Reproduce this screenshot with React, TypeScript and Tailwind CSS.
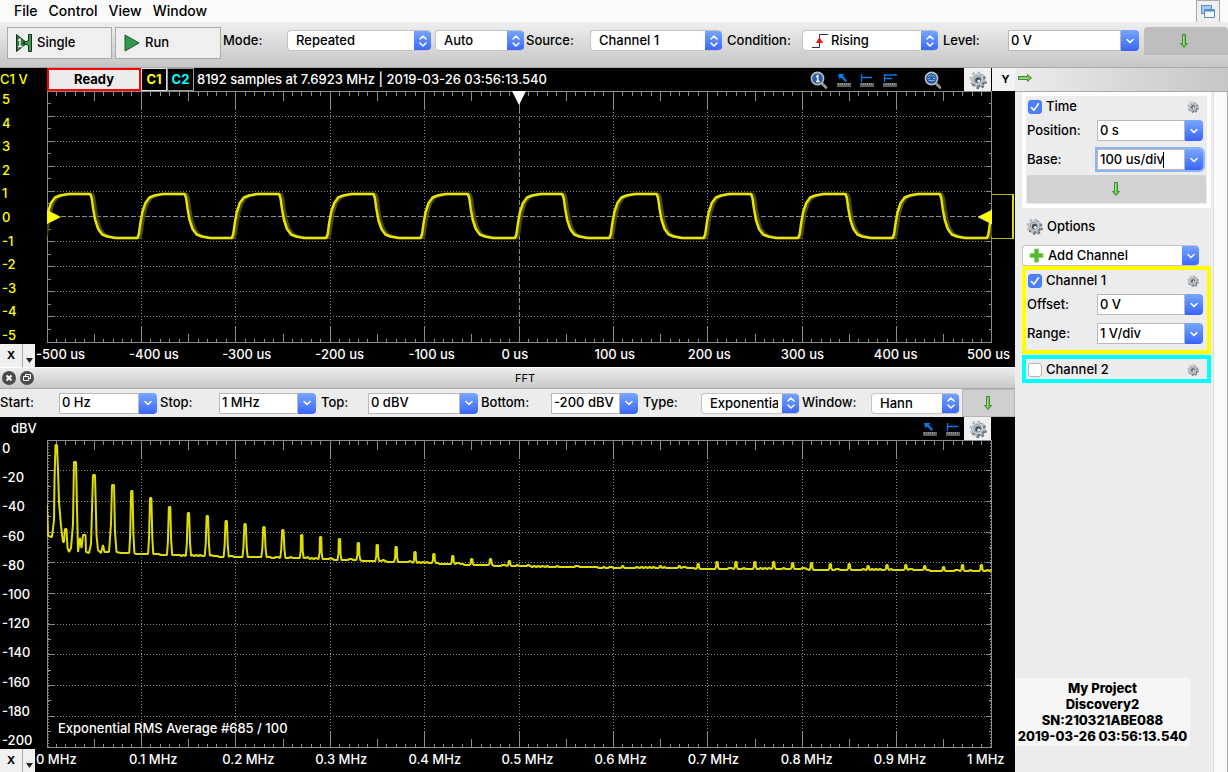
import { useId, type ReactNode } from "react";

const FONT = "font-['Inter','Liberation_Sans',sans-serif]";

/* ---------- icons ---------- */

const Chevron = () => (
  <svg width="10" height="6" viewBox="0 0 10 6" fill="none" stroke="white" strokeWidth="1.5" strokeLinecap="round" strokeLinejoin="round">
    <path d="M2 1.5 5 4.5 8 1.5" />
  </svg>
);

const UpDown = () => (
  <svg width="10" height="14" viewBox="0 0 10 14" fill="none" stroke="white" strokeWidth="1.5" strokeLinecap="round" strokeLinejoin="round">
    <path d="M2 5 5 2 8 5M2 9 5 12 8 9" />
  </svg>
);

const GreenArrow = ({ right = false }: { right?: boolean }) => (
  <svg width="14" height="14" viewBox="0 0 14 14" className={right ? "-rotate-90" : ""}>
    <path d="M5.5.5h3v9h2L7 13.5 3.5 9.5h2z" fill="#6cc04a" stroke="#3b8a35" strokeLinejoin="round" />
    <path d="M6.7 1.5v9" stroke="#b5e39a" />
  </svg>
);

const Gear = ({ size }: { size: number }) => (
  <svg width={size} height={size} viewBox="0 0 18 18">
    <g fill="#6f787e">
      <circle cx="10" cy="10.2" r="6.2" />
      <circle cx="10" cy="10.2" r="6.8" fill="none" stroke="#6f787e" strokeWidth="2" strokeDasharray="2.7 2.6" />
    </g>
    <circle cx="8.4" cy="8.4" r="5.9" fill="#c9ced2" />
    <circle cx="8.4" cy="8.4" r="6.8" fill="none" stroke="#b4bbc0" strokeWidth="2.4" strokeDasharray="2.7 2.6" />
    <circle cx="8.4" cy="8.4" r="3.8" fill="none" stroke="#8b959b" strokeWidth="1" />
    <circle cx="9" cy="9" r="2.8" fill="#414c54" />
    <circle cx="9.8" cy="10" r="1.6" fill="#e6eaec" />
  </svg>
);

const Magnifier = ({ one = false }: { one?: boolean }) => (
  <svg width="18" height="18" viewBox="0 0 18 18">
    <path d="m11.5 12 4.5 4.5" stroke="#9a9a9a" strokeWidth="2.6" strokeLinecap="round" />
    <circle cx="7.5" cy="7.5" r="6.1" fill="#2a5da0" stroke="#b9bdc2" strokeWidth="1.6" />
    {one ? (
      <path d="M6 6l1.8-1.5V10.5M6 10.5h3.6" fill="none" stroke="white" strokeWidth="1.3" />
    ) : (
      <path d="M4.500 9.500h6M3.500 7.500h2.500M9 7.500h2.500M6 4 4 6M9 4l2 2M6.500 5h2" fill="none" stroke="#7fb0e8" />
    )}
  </svg>
);

const MeasureIcon = ({ kind }: { kind: "cursor" | "single" | "double" }) => (
  <svg width="14" height="14" viewBox="0 0 14 14" fill="none">
    <path d="M0 10h14v4H0z" fill="#5f5f5f" />
    <path d="M1.5 10v2M3.5 10v2M5.5 10v2M7.5 10v2M9.5 10v2M11.5 10v2" stroke="#8d8d8d" />
    {kind === "cursor" && <path d="M1 1h6.500L5.800 2.800 10 7.500 8.500 9 4.200 4.500 2.500 6.500z" fill="#0a7ae8" />}
    {kind === "single" && <path d="M1.5 1v8M1.5 4.500H12" stroke="#0a7ae8" strokeWidth="1.300" />}
    {kind === "double" && <path d="M1.5 1v8M1.5 2H14M1.5 5.500H9" stroke="#0a7ae8" strokeWidth="1.300" />}
  </svg>
);

const SingleIcon = () => (
  <svg width="16" height="18" viewBox="0 0 16 18">
    <path d="M.5.5 11 9 .5 17.500z" fill="#2c7a3f" stroke="#1c2b20" />
    <path d="M15.500.500h-3v6L7 9l5.500 2.500v6h3z" fill="#35a04f" stroke="#1c2b20" />
    <path d="M2 6.500 4 5v7.500M2 12.500h4.500" fill="none" stroke="white" strokeWidth="1.300" />
  </svg>
);

const RunIcon = () => (
  <svg width="16" height="18" viewBox="0 0 16 18">
    <path d="M1 1l14 8L1 17z" fill="#2f9a4b" stroke="#23502f" strokeLinejoin="round" />
  </svg>
);

const RisingIcon = () => (
  <svg width="18" height="16" viewBox="0 0 18 16" fill="none">
    <path d="M1 14.500h7.500v-13H17" stroke="#333" />
    <path d="m8.500 4 3.500 6H5z" fill="#ff1010" />
  </svg>
);

/* ---------- controls ---------- */

const CAP = "bg-linear-to-b from-[#78a6ff] to-[#3b63fb] flex items-center justify-center";

type FieldProps = { label: string; value: string; labelWidth?: string; width: string };

const Combo = ({ label, value, labelWidth = "", width, focused = false }: FieldProps & { focused?: boolean }) => {
  const id = useId();
  return (
    <div className="flex items-center shrink-0">
      <label htmlFor={id} className={labelWidth}>{label}</label>
      <div className={`flex h-[21px] rounded-r-[4px] ${width} ${focused ? "ring-2 ring-[#8db4f5]" : ""}`}>
        <div className="flex flex-1 min-w-0 items-center border border-[#b9b9b9] bg-white">
          <input id={id} defaultValue={value} size={focused ? 9 : 4} className={focused ? "w-[65px] pl-[2px] outline-none" : "w-full pl-[2px] outline-none"} />
          {focused && <span className="h-4 w-px bg-black" />}
        </div>
        <button aria-label={`${label} values`} className={`w-[18px] rounded-r-[4px] ${CAP}`}>
          <Chevron />
        </button>
      </div>
    </div>
  );
};

const Pick = ({ label, value, labelWidth = "", width, hideLabel = false, icon }: FieldProps & { hideLabel?: boolean; icon?: ReactNode }) => {
  const id = useId();
  return (
    <div className="flex items-center shrink-0">
      {!hideLabel && <label htmlFor={id} className={labelWidth}>{label}</label>}
      <div className={`flex h-[21px] overflow-hidden rounded-[4px] border border-[#c4c4c4] border-r-0 bg-white ${width}`}>
        {icon && <span className="flex items-center pl-2">{icon}</span>}
        <select id={id} aria-label={label} className={`flex-1 min-w-0 appearance-none pr-1 outline-none ${icon ? "pl-[2px]" : "pl-[8px]"}`}>
          <option>{value}</option>
        </select>
        <span className={`-my-px w-[17px] ${CAP}`}>
          <UpDown />
        </span>
      </div>
    </div>
  );
};

const Check = ({ label, checked = false }: { label: string; checked?: boolean }) => (
  <div className="flex h-5 items-center justify-between pl-[2px] pr-2 pt-px">
    <label className="flex items-center gap-1">
      <span className="grid">
        <input
          type="checkbox"
          defaultChecked={checked}
          className="peer col-start-1 row-start-1 size-[14px] appearance-none rounded-[3px] border border-[#b5b5b5] bg-white checked:border-[#4a78f5] checked:bg-[#4f80fa]"
        />
        <svg viewBox="0 0 14 14" className="pointer-events-none invisible col-start-1 row-start-1 size-[14px] peer-checked:visible" fill="none" stroke="white" strokeWidth="1.6" strokeLinecap="round">
          <path d="M3.500 7.500 6 10.200 10.500 3.800" />
        </svg>
      </span>
      {label}
    </label>
    <button aria-label={`${label} settings`}><Gear size={12} /></button>
  </div>
);

const AxisCorner = () => (
  <div className="flex h-[23px] w-[35px] shrink-0 text-[11px] font-bold text-black">
    <button className="w-[23px] border-r border-[#aaa] bg-[#f0f0f0]">X</button>
    <button aria-label="X axis menu" className="flex flex-1 items-end justify-center bg-[#f0f0f0] pb-1">
      <svg width="7" height="5" viewBox="0 0 7 5"><path d="M0 0h7L3.500 5z" fill="#222" /></svg>
    </button>
  </div>
);

/* ---------- plots ---------- */

const W = 945;

const Grid = ({ height, centered = false, fine = false }: { height: number; centered?: boolean; fine?: boolean }) => {
  const bottom = height - 0.5;
  const dx = (W - 1) / 10;
  const dy = (height - 1) / 10;
  const inner = [1, 2, 3, 4, 5, 6, 7, 8, 9];
  let ticks = "";
  for (let i = 1; i < 100; i++) {
    const x = Math.floor((i * dx) / 10) + 0.5;
    const len = i % 10 === 0 ? 17 : i % 5 === 0 ? 9 : 4;
    ticks += `M${x} .5v${len}M${x} ${bottom}v${-len}`;
  }
  for (let i = 1; i < 20; i++) {
    const y = Math.floor((i * dy) / 2) + 0.5;
    const len = i % 2 === 0 ? 6 : 3;
    ticks += `M.5 ${y}h${len}M${W - 0.5} ${y}h${-len}`;
  }
  return (
    <g stroke="#8c8c8c" fill="none" shapeRendering="crispEdges">
      <rect x=".5" y=".5" width={W - 1} height={height - 1} />
      <path d={ticks} />
      {inner.map((i) => {
        const mid = centered && i === 5;
        const x = Math.floor(i * dx) + 0.5;
        const y = Math.floor(i * dy) + 0.5;
        return (
          <g key={i} strokeDasharray={mid ? "5 2" : "1 2"}>
            <path d={`M${x} 18V${height - 18}`} />
            <path d={`M7 ${y}H${W - 7}`} />
          </g>
        );
      })}
      {fine && <path d={`M1.500 0V${height}M${W - 1.5} 0V${height}`} strokeDasharray="1 2" />}
    </g>
  );
};

const RISE = [[0, 147], [1.5, 143], [3, 132], [5, 121], [8, 112], [12, 106.5], [17, 104.5], [25, 103], [46.5, 103]];

const wave = (shift: number) => {
  const pts: string[] = [];
  for (let p = -1; p < 11; p++) {
    const start = -4 + p * 94.4 + shift;
    RISE.forEach(([t, y]) => pts.push(`${(start + t).toFixed(1)} ${y}`));
    RISE.forEach(([t, y]) => pts.push(`${(start + 47.2 + t).toFixed(1)} ${250 - y}`));
  }
  return "M" + pts.join("L");
};

const ScopePlot = () => (
  <svg viewBox={`0 0 ${W} 252`} preserveAspectRatio="none" className="h-[252px] min-w-0 flex-1">
    <Grid height={252} centered />
    <g fill="none" strokeLinejoin="round">
      <path d={wave(2.5)} stroke="#4d4b00" strokeWidth="2.5" />
      <path d={wave(0)} stroke="#e8e600" strokeWidth="2.5" />
    </g>
    <path d="M465 0h14l-7 14z" fill="white" />
    <path d="M0 119v14l14-7z" fill="#ffff00" />
    <path d="M945 119v14l-14-7z" fill="#ffff00" stroke="#fff" strokeWidth=".5" />
  </svg>
);

// first harmonics, traced point by point
const HEAD = [
  [0, 65], [1, 96], [5, 97], [7, 80], [7.5, 40], [8.5, 5], [10, 5], [11, 30], [12, 62], [14, 86], [16, 102], [17, 102], [18, 89], [19.5, 89],
  [20.5, 108], [22, 112], [24, 108], [26, 84], [27, 22], [29, 22], [30.5, 90], [31, 112], [33, 98], [34.5, 108], [36, 95], [38.5, 95], [39, 112],
  [42, 113], [44, 104], [46, 35], [48, 35], [49.5, 95], [51, 110], [54, 113], [56, 105], [57.5, 112], [62, 112], [64, 84], [65, 45], [67, 45],
  [68, 92], [69.500, 112], [74, 113],
];

// peak heights of the odd harmonics that follow, 18.88 px apart
const PEAKS = [
  51, 58, 67, 73, 76, 81, 84, 87, 90, 95, 97, 99, 103, 105, 107, 112, 114, 116, 119, 119, 121, 125, 126, 127, 127, 127, 126, 127, 126,
  126, 124, 122, 122, 122, 122, 123, 123, 124, 124, 126, 125, 125, 126, 127, 125, 125,
];

const BASE = [[74, 113], [145, 116], [250, 118], [350, 122], [430, 125], [500, 127], [600, 128], [700, 129], [820, 130], [945, 131]];

const floorAt = (x: number) => {
  const i = Math.max(1, BASE.findIndex(([bx]) => bx >= x));
  const [x0, y0] = BASE[i - 1];
  const [x1, y1] = BASE[i];
  return Math.round(y0 + ((y1 - y0) * (x - x0)) / (x1 - x0));
};

const spectrum = () => {
  const pts = HEAD.map((p) => p.join(" "));
  PEAKS.forEach((top, k) => {
    const x = 84.8 + k * 18.88;
    const floor = floorAt(x);
    const w = top < 92 ? 1.6 : 1;
    const knee = floor - (floor - top) * 0.3;
    pts.push(`${x - w - 1} ${floor}`, `${x - w} ${knee}`, `${x - 0.7} ${top}`, `${x + 0.7} ${top}`, `${x + w} ${knee}`, `${x + w + 1} ${floor}`);
    for (let j = 4; j < 16; j += 2) {
      const wobble = ((k * 7 + j * 5 + ((k * j) % 3)) % 4) === 1 ? -1 : 0;
      if (x + j < W) pts.push(`${x + j} ${floorAt(x + j) + wobble}`);
    }
  });
  return "M" + pts.join("L") + "H944";
};

const FftPlot = () => (
  <svg viewBox={`0 0 ${W} 308`} preserveAspectRatio="none" className="min-h-[308px] min-w-0 flex-1">
    <Grid height={308} fine />
    <path d={spectrum()} fill="none" stroke="#dcdc00" strokeWidth="2" strokeLinejoin="bevel" />
  </svg>
);

const YAxis = ({ labels, color }: { labels: string[]; color: string }) => (
  <div className={`flex w-[47px] shrink-0 flex-col justify-between pl-[2px] leading-4 ${color}`}>
    {labels.map((l) => <span key={l}>{l}</span>)}
  </div>
);

const XAxis = ({ labels }: { labels: string[] }) => (
  <div className="flex h-6 shrink-0 items-center">
    <AxisCorner />
    <div className="flex flex-1 pl-px whitespace-nowrap">
      {labels.map((l, i) => <span key={l} className={i < 10 ? "w-0 flex-1" : "w-[48px]"}>{l}</span>)}
    </div>
  </div>
);

/* ---------- page ---------- */

const TopBar = () => (
  <>
    <header className="flex h-[22px] items-center justify-between bg-[#fafafa] pl-[14px] pr-2 text-[14px]">
      <nav className="flex gap-[11px] pb-px leading-5">
        <button>File</button>
        <button>Control</button>
        <button>View</button>
        <button>Window</button>
      </nav>
      <button aria-label="Windows" className="flex h-[22px] w-6 items-center justify-center border border-b-0 border-[#aaa] bg-[#f0f0f0]">
        <svg width="14" height="13" viewBox="0 0 14 13" stroke="#5b8cc8">
          <path d="M.5.500h10v8H.5z" fill="#a9c8ee" />
          <path d="M3.500 4.500h10v8h-10z" fill="#f4f9ff" />
          <path d="M3.500 5.500h10" strokeWidth="2" />
        </svg>
      </button>
    </header>
    <div className="flex h-[46px] items-start border-b border-[#aaa] bg-linear-to-b from-[#efefef] to-[#c6c6c6] pt-[5px] pl-[7px]">
      <div className="flex gap-[3px]">
        <button className="flex h-8 w-[105px] items-center gap-[5px] border border-[#aaa] bg-[#efefef] pl-2"><SingleIcon />Single</button>
        <button className="flex h-8 w-[106px] items-center gap-[5px] border border-[#aaa] bg-[#efefef] pl-2"><RunIcon />Run</button>
      </div>
      <div className="flex flex-1 items-center pt-[3px] pl-[2px]">
        <Pick label="Mode:" value="Repeated" labelWidth="w-16" width="w-[144px] mr-1" />
        <Pick label="Trigger" hideLabel value="Auto" width="w-[89px] mr-[2px]" />
        <Pick label="Source:" value="Channel 1" labelWidth="w-16" width="w-[132px] mr-[5px]" />
        <Pick label="Condition:" value="Rising" labelWidth="w-[75px]" width="w-[136px] mr-[5px]" icon={<RisingIcon />} />
        <Combo label="Level:" value="0 V" labelWidth="w-[65px]" width="w-[131px] mr-[5px]" />
      </div>
      <button aria-label="Show more" className="flex h-7 w-[84px] items-center justify-center rounded-t-[4px] bg-[#bdbdbd] pr-1"><GreenArrow /></button>
    </div>
  </>
);

const Scope = () => (
  <section className="bg-black text-white">
    <div className="flex h-[23px] items-stretch">
      <span className="w-[47px] self-center text-[#ffff00]">C1 V</span>
      <span className="w-[94px] border-2 border-[#ff0000] bg-[#ececec] text-center font-bold leading-[19px] text-black">Ready</span>
      <button className="w-[26px] border border-[#ddd] font-bold text-[#ffff00]">C1</button>
      <button className="w-[27px] border border-[#999] font-bold text-[#00ffff]">C2</button>
      <span className="flex-1 self-center pl-[3px] whitespace-nowrap">8192 samples at 7.6923 MHz | 2019-03-26 03:56:13.540</span>
      <div className="flex items-center gap-[9px] pr-[22px]">
        <Magnifier one />
        <MeasureIcon kind="cursor" />
        <MeasureIcon kind="single" />
        <MeasureIcon kind="double" />
        <div className="pl-[18px]"><Magnifier /></div>
      </div>
      <button aria-label="Plot settings" className="flex w-[27px] items-center justify-center bg-[#f0f0f0]"><Gear size={18} /></button>
      <button className="ml-px w-[23px] bg-[#f3f3f3] pl-1 text-[11px] font-bold text-black">Y</button>
    </div>
    <div className="flex">
      <YAxis color="text-[#ffff00]" labels={["5", "4", "3", "2", "1", "0", "-1", "-2", "-3", "-4", "-5"]} />
      <ScopePlot />
      <svg width="23" height="252" viewBox="0 0 23 252" className="shrink-0">
        <path d="M0 103.500h21.500M0 147.500h21.500" stroke="#bdb800" />
        <path d="M21 103v45" stroke="#e0dc00" strokeWidth="2" />
      </svg>
    </div>
    <XAxis labels={["-500 us", "-400 us", "-300 us", "-200 us", "-100 us", "0 us", "100 us", "200 us", "300 us", "400 us", "500 us"]} />
  </section>
);

const Fft = () => (
  <section className="flex flex-1 flex-col">
    <div className="flex h-[22px] items-center border-t border-b border-t-white border-b-[#aaa] bg-linear-to-b from-[#ececec] to-[#c9c9c9] pl-[2px]">
      <div className="flex gap-1 pr-px">
        <button aria-label="Close">
          <svg width="14" height="14" viewBox="0 0 14 14"><circle cx="7" cy="7" r="7" fill="#4b4b4b" /><path d="m4.500 4.500 5 5m0-5-5 5" stroke="white" strokeWidth="2" /></svg>
        </button>
        <button aria-label="Detach">
          <svg width="14" height="14" viewBox="0 0 14 14" fill="none"><circle cx="7" cy="7" r="7" fill="#4b4b4b" /><path d="M5.500 5.500v-2h5v4h-2M3.500 5.500h5v4h-5z" stroke="white" /></svg>
        </button>
      </div>
      <h2 className="flex-1 text-center text-[11px] font-normal">FFT</h2>
    </div>
    <div className="flex h-7 items-center bg-[#ececec]">
      <Combo label="Start:" value="0 Hz" labelWidth="w-[59px]" width="w-[98px] mr-[3px]" />
      <Combo label="Stop:" value="1 MHz" labelWidth="w-[59px]" width="w-[97px] mr-[5px]" />
      <Combo label="Top:" value="0 dBV" labelWidth="w-[47px]" width="w-[110px] mr-[3px]" />
      <Combo label="Bottom:" value="-200 dBV" labelWidth="w-[70px]" width="w-[87px] mr-[5px]" />
      <Pick label="Type:" value="Exponential" labelWidth="w-[58px]" width="w-[98px] mr-[3px]" />
      <Pick label="Window:" value="Hann" labelWidth="w-[69px]" width="w-[88px] mr-[3px]" />
      <button aria-label="Show more" className="flex h-7 flex-1 items-center justify-center border border-[#b5b5b5] bg-[#cfcfcf] pr-[2px]"><GreenArrow /></button>
    </div>
    <div className="flex flex-1 flex-col bg-black text-white">
      <div className="flex h-[23px] items-center">
        <span className="flex-1 pl-[11px]">dBV</span>
        <div className="flex gap-[9px] pr-1">
          <MeasureIcon kind="cursor" />
          <MeasureIcon kind="single" />
        </div>
        <button aria-label="FFT settings" className="mr-6 flex h-[23px] w-[27px] items-center justify-center bg-[#f0f0f0]"><Gear size={18} /></button>
      </div>
      <div className="relative flex flex-1 pr-[23px]">
        <YAxis color="text-white" labels={["0", "-20", "-40", "-60", "-80", "-100", "-120", "-140", "-160", "-180", "-200"]} />
        <FftPlot />
        <p className="absolute bottom-3 left-[58px] leading-4">Exponential RMS Average #685 / 100</p>
      </div>
      <XAxis labels={["0 MHz", "0.1 MHz", "0.2 MHz", "0.3 MHz", "0.4 MHz", "0.5 MHz", "0.6 MHz", "0.7 MHz", "0.8 MHz", "0.9 MHz", "1 MHz"]} />
    </div>
  </section>
);

const Sidebar = () => (
  <aside className="flex w-[213px] shrink-0 flex-col bg-[#ececec]">
    <div className="flex h-6 items-center border-b border-[#aaa] bg-linear-to-r from-[#ececec] to-[#c6c6c6] pl-[3px] pb-[3px]">
      <button aria-label="Hide panel"><GreenArrow right /></button>
    </div>
    <div className="flex flex-1">
      <div className="flex w-[198px] flex-col">
        <div className="flex flex-col pl-[7px] pr-[2px]">
          <div className="border-4 border-white pb-px">
            <Check label="Time" checked />
            <div className="flex flex-col gap-2 pt-1 pb-[5px] pl-px">
              <Combo label="Position:" value="0 s" labelWidth="w-[70px]" width="w-[106px]" />
              <Combo label="Base:" value="100 us/div" labelWidth="w-[70px]" width="w-[106px]" focused />
            </div>
            <button aria-label="More time options" className="ml-px flex h-7 w-[179px] items-center justify-center rounded-t-[4px] bg-[#d2d2d2] pr-[2px]"><GreenArrow /></button>
          </div>
          <button className="flex h-[37px] items-center gap-1 pl-1"><Gear size={17} />Options</button>
          <div className="mr-3 flex h-[21px] overflow-hidden rounded-[4px] border border-r-0 border-[#c4c4c4] bg-white">
            <button className="flex flex-1 items-center gap-1 pl-[6px]">
              <svg width="15" height="15" viewBox="0 0 15 15"><path d="M5.500 1h4v4.500H14v4H9.500V14h-4V9.500H1v-4h4.500z" fill="#55b82e" stroke="#8ad065" strokeLinejoin="round" /></svg>
              Add Channel
            </button>
            <button aria-label="Channel list" className={`-my-px w-[17px] ${CAP}`}><Chevron /></button>
          </div>
          <div className="border-4 border-[#ffff00]">
            <Check label="Channel 1" checked />
            <div className="flex flex-col gap-2 pt-1 pb-[6px] pl-px">
              <Combo label="Offset:" value="0 V" labelWidth="w-[70px]" width="w-[106px]" />
              <Combo label="Range:" value="1 V/div" labelWidth="w-[70px]" width="w-[106px]" />
            </div>
          </div>
          <div className="mt-px border-4 border-[#00ffff]">
            <Check label="Channel 2" />
          </div>
        </div>
        <div className="mt-auto mb-[26px] w-[175px] bg-[#f6f6f6] py-[2px] text-center font-extrabold leading-4 whitespace-nowrap">
          <p>My Project</p>
          <p>Discovery2</p>
          <p>SN:210321ABE088</p>
          <p>2019-03-26 03:56:13.540</p>
        </div>
      </div>
      <div className="flex-1 border-x border-l-[#e0e0e0] border-r-[#aaa] bg-[#fafafa]" />
    </div>
  </aside>
);

export default function App() {
  return (
    <div className={`flex min-h-screen flex-col bg-[#ececec] text-[13px] font-medium text-black ${FONT}`}>
      <TopBar />
      <main className="flex flex-1">
        <div className="flex min-w-0 flex-1 flex-col">
          <Scope />
          <Fft />
        </div>
        <Sidebar />
      </main>
    </div>
  );
}
